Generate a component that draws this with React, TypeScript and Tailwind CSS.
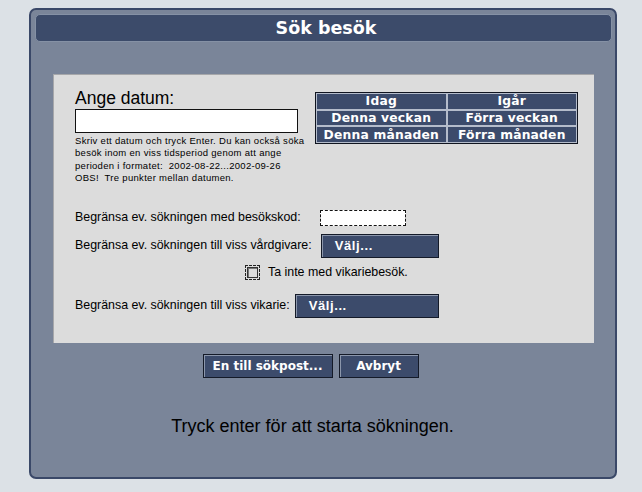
export default function App() {
  const dateButtons = ["Idag", "Igår", "Denna veckan", "Förra veckan", "Denna månaden", "Förra månaden"];

  return (
    <div className="w-[642px] h-[492px] bg-[#dce1e6] pt-[8px] pl-[29px] font-['Liberation_Sans',Arial,sans-serif] text-black">
      <div className="w-[588px] h-[471px] border-2 border-[#3a4868] rounded-[7px] bg-[#7a8599] pt-[4px] pl-[4px] pr-[3px] flex flex-col">
        {/* titel */}
        <div className="h-[28px] rounded-[5px] bg-[#3c4b6a] border border-[#8591a5] flex items-center justify-center pl-[5px]">
          <span className="text-white font-bold text-[17.5px] font-['DejaVu_Sans',Verdana,sans-serif]">Sök besök</span>
        </div>

        {/* formulär */}
        <div className="mt-[32px] ml-[18px] w-[541px] h-[269px] bg-[#dcdcdc] border-t border-l border-[#a6a7aa] pt-[13px] pl-[21px] flex flex-col">
          <div className="flex">
            <div className="w-[223px] flex flex-col">
              <div className="text-[17.5px] leading-[21px]">Ange datum:</div>
              <input type="text" className="w-[223px] h-[24px] bg-white border border-[#111] outline-none" />
              <p className="mt-[2px] text-[9.5px] leading-[12.4px] tracking-[0.3px] whitespace-pre w-[240px]">
                {"Skriv ett datum och tryck Enter. Du kan också söka\nbesök inom en viss tidsperiod genom att ange\nperioden i formatet:  2002-08-22...2002-09-26\nOBS!  Tre punkter mellan datumen."}
              </p>
            </div>
            <div className="ml-[17px] mt-[4px] w-[263px] h-[52px] border border-[#10141f] grid grid-cols-2 grid-rows-3">
              {dateButtons.map((b) => (
                <button
                  key={b}
                  className="bg-[#3c4b6b] border border-[#b4bccb] text-white font-bold text-[12.3px] leading-none tracking-[0.2px] font-['DejaVu_Sans',Verdana,sans-serif] flex items-center justify-center"
                >
                  {b}
                </button>
              ))}
            </div>
          </div>

          {/* besökskod */}
          <div className="mt-[25px] h-[16px] flex items-center text-[12.4px]">
            <span>Begränsa ev. sökningen med besökskod:</span>
            <input type="text" className="ml-[19px] w-[86px] h-[16px] bg-white border border-dashed border-[#111] outline-none" />
          </div>

          {/* vårdgivare */}
          <div className="mt-[8px] h-[24px] flex items-center text-[12.4px]">
            <span>Begränsa ev. sökningen till viss vårdgivare:</span>
            <button className="ml-[9px] w-[118px] h-[24px] bg-[#3c4b6b] border border-[#141a28] shadow-[inset_1px_1px_0_#8b96ab] text-white font-bold text-[13px] tracking-[0.6px] text-left pl-[13px]">
              Välj...
            </button>
          </div>

          {/* vikarie-checkbox */}
          <div className="mt-[7px] h-[15px] ml-[170px] flex items-center text-[12.4px]">
            <span className="w-[15px] h-[15px] border border-dashed border-[#222] flex items-center justify-center">
              <span className="w-[11px] h-[11px] border border-[#333] shadow-[inset_1px_1px_0_#777]" />
            </span>
            <span className="ml-[8px]">Ta inte med vikariebesök.</span>
          </div>

          {/* vikarie */}
          <div className="mt-[14px] h-[24px] flex items-center text-[12.4px]">
            <span>Begränsa ev. sökningen till viss vikarie:</span>
            <button className="ml-[5px] w-[144px] h-[24px] bg-[#3c4b6b] border border-[#141a28] shadow-[inset_1px_1px_0_#8b96ab] text-white font-bold text-[13px] tracking-[0.6px] text-left pl-[13px]">
              Välj...
            </button>
          </div>
        </div>

        {/* knappar */}
        <div className="mt-[11px] flex justify-center gap-[6px] pr-[26px]">
          <button className="w-[130px] h-[24px] bg-[#3c4b6b] border border-[#141a28] shadow-[inset_1px_1px_0_#8b96ab] text-white font-bold text-[12px] font-['DejaVu_Sans',Verdana,sans-serif]">
            En till sökpost...
          </button>
          <button className="w-[80px] h-[24px] bg-[#3c4b6b] border border-[#141a28] shadow-[inset_1px_1px_0_#8b96ab] text-white font-bold text-[12px] font-['DejaVu_Sans',Verdana,sans-serif]">
            Avbryt
          </button>
        </div>

        <div className="mt-[37px] text-center text-[18px] leading-[22px] pr-[22px]">
          Tryck enter för att starta sökningen.
        </div>
      </div>
    </div>
  );
}
